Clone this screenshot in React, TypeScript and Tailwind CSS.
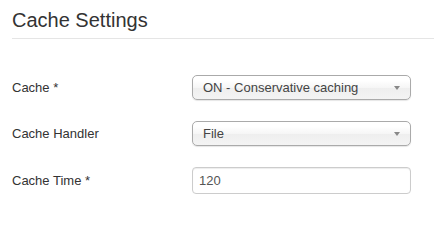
function SelectBox({ value }: { value: string }) {
  return (
    <div className="relative flex h-[25px] w-[219px] items-center rounded-[5px] border border-[#aaa] bg-[linear-gradient(#fff_20%,#f6f6f6_50%,#eee_52%,#f4f4f4_100%)] pl-[10px] pr-6 text-[13px] text-[#444] shadow-[0_1px_1px_rgba(0,0,0,0.1)]">
      <span className="truncate">{value}</span>
      <span className="absolute right-[10px] top-[10px] h-0 w-0 border-x-[3px] border-t-[4px] border-x-transparent border-t-[#888]" />
    </div>
  );
}

function Row({ label, children }: { label: string; children: React.ReactNode }) {
  return (
    <div className="flex items-center">
      <label className="w-[180px] text-[13px] text-[#333]">{label}</label>
      {children}
    </div>
  );
}

export default function App() {
  return (
    <div className="h-[222px] w-[434px] bg-white pl-3 font-['Liberation_Sans',Arial,sans-serif]">
      <h2 className="border-b border-[#e5e5e5] pb-2 pt-[10px] text-[20px] leading-[20px] font-normal text-[#333]">
        Cache Settings
      </h2>

      <div className="mt-[36px] flex flex-col gap-[21px]">
        <Row label="Cache *">
          <SelectBox value="ON - Conservative caching" />
        </Row>
        <Row label="Cache Handler">
          <SelectBox value="File" />
        </Row>
        <Row label="Cache Time *">
          <input
            type="text"
            defaultValue="120"
            className="h-[27px] w-[219px] rounded-[4px] border border-[#ccc] bg-white px-[6px] text-[13px] text-[#555] shadow-[inset_0_1px_1px_rgba(0,0,0,0.075)] outline-none"
          />
        </Row>
      </div>
    </div>
  );
}
